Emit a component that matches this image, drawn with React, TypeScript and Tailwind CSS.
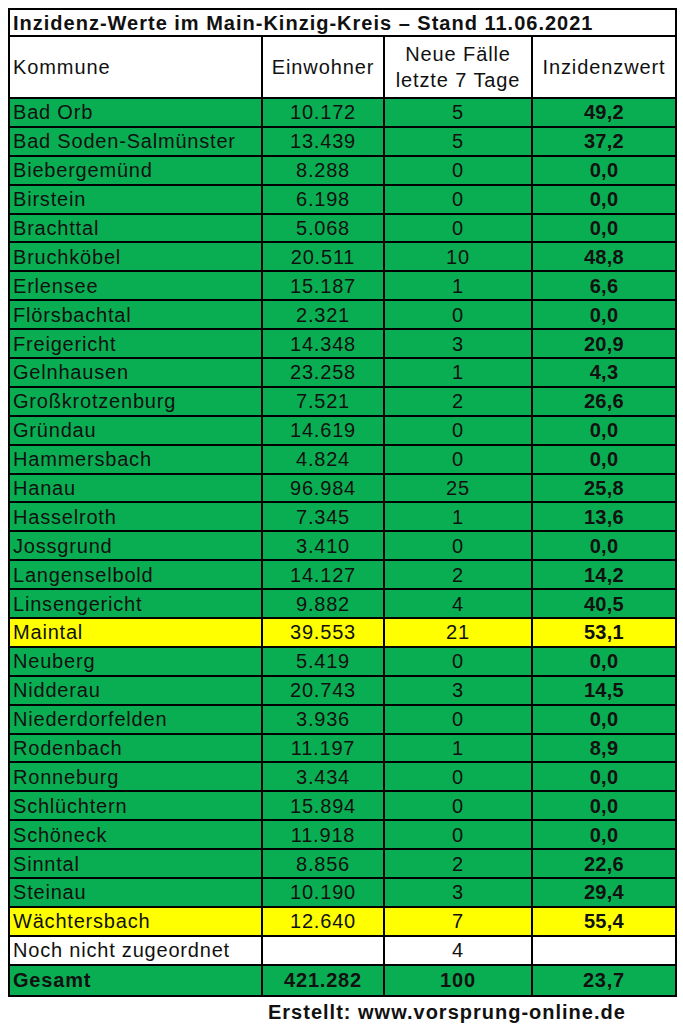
import React from "react";

type Row = { name: string; ew: string; neu: string; inz: string; color: "g" | "y" | "w"; bold?: boolean };

const rows: Row[] = [
  { name: "Bad Orb", ew: "10.172", neu: "5", inz: "49,2", color: "g" },
  { name: "Bad Soden-Salmünster", ew: "13.439", neu: "5", inz: "37,2", color: "g" },
  { name: "Biebergemünd", ew: "8.288", neu: "0", inz: "0,0", color: "g" },
  { name: "Birstein", ew: "6.198", neu: "0", inz: "0,0", color: "g" },
  { name: "Brachttal", ew: "5.068", neu: "0", inz: "0,0", color: "g" },
  { name: "Bruchköbel", ew: "20.511", neu: "10", inz: "48,8", color: "g" },
  { name: "Erlensee", ew: "15.187", neu: "1", inz: "6,6", color: "g" },
  { name: "Flörsbachtal", ew: "2.321", neu: "0", inz: "0,0", color: "g" },
  { name: "Freigericht", ew: "14.348", neu: "3", inz: "20,9", color: "g" },
  { name: "Gelnhausen", ew: "23.258", neu: "1", inz: "4,3", color: "g" },
  { name: "Großkrotzenburg", ew: "7.521", neu: "2", inz: "26,6", color: "g" },
  { name: "Gründau", ew: "14.619", neu: "0", inz: "0,0", color: "g" },
  { name: "Hammersbach", ew: "4.824", neu: "0", inz: "0,0", color: "g" },
  { name: "Hanau", ew: "96.984", neu: "25", inz: "25,8", color: "g" },
  { name: "Hasselroth", ew: "7.345", neu: "1", inz: "13,6", color: "g" },
  { name: "Jossgrund", ew: "3.410", neu: "0", inz: "0,0", color: "g" },
  { name: "Langenselbold", ew: "14.127", neu: "2", inz: "14,2", color: "g" },
  { name: "Linsengericht", ew: "9.882", neu: "4", inz: "40,5", color: "g" },
  { name: "Maintal", ew: "39.553", neu: "21", inz: "53,1", color: "y" },
  { name: "Neuberg", ew: "5.419", neu: "0", inz: "0,0", color: "g" },
  { name: "Nidderau", ew: "20.743", neu: "3", inz: "14,5", color: "g" },
  { name: "Niederdorfelden", ew: "3.936", neu: "0", inz: "0,0", color: "g" },
  { name: "Rodenbach", ew: "11.197", neu: "1", inz: "8,9", color: "g" },
  { name: "Ronneburg", ew: "3.434", neu: "0", inz: "0,0", color: "g" },
  { name: "Schlüchtern", ew: "15.894", neu: "0", inz: "0,0", color: "g" },
  { name: "Schöneck", ew: "11.918", neu: "0", inz: "0,0", color: "g" },
  { name: "Sinntal", ew: "8.856", neu: "2", inz: "22,6", color: "g" },
  { name: "Steinau", ew: "10.190", neu: "3", inz: "29,4", color: "g" },
  { name: "Wächtersbach", ew: "12.640", neu: "7", inz: "55,4", color: "y" },
  { name: "Noch nicht zugeordnet", ew: "", neu: "4", inz: "", color: "w" },
  { name: "Gesamt", ew: "421.282", neu: "100", inz: "23,7", color: "g", bold: true },
];

const bgFor = (c: Row["color"]) =>
  c === "g" ? "bg-[#0aae52]" : c === "y" ? "bg-[#ffff00]" : "bg-white";

export default function App() {
  return (
    <div
      className="w-[683px] h-[1024px] bg-white pt-[8px] pl-[8px] text-[#111]"
      style={{ fontFamily: '"Liberation Sans", Arial, sans-serif' }}
    >
      <div className="w-[669px] border-2 border-black">
        <div className="h-[27px] border-b-2 border-black flex items-center pl-[3px] font-bold text-[20px] tracking-[1px] leading-none whitespace-nowrap">
          Inzidenz-Werte im Main-Kinzig-Kreis – Stand 11.06.2021
        </div>
        <div className="grid grid-cols-[253px_122px_148px_142px] h-[62px] border-b-2 border-black text-[20px] tracking-[0.9px] leading-[26px]">
          <div className="border-r-2 border-black flex items-center pl-[3px]">Kommune</div>
          <div className="border-r-2 border-black flex items-center justify-center">Einwohner</div>
          <div className="border-r-2 border-black flex flex-col items-center justify-center text-center">
            <span>Neue Fälle</span>
            <span>letzte 7 Tage</span>
          </div>
          <div className="flex items-center justify-center">Inzidenzwert</div>
        </div>
        {rows.map((r, i) => (
          <div
            key={r.name}
            className={`grid grid-cols-[253px_122px_148px_142px] h-[28.9px] ${
              i < rows.length - 1 ? "border-b-2 border-black" : ""
            } ${bgFor(r.color)} text-[20px] tracking-[0.8px] leading-none ${r.bold ? "font-bold" : ""}`}
          >
            <div className="border-r-2 border-black flex items-center pl-[3px] whitespace-nowrap">{r.name}</div>
            <div className="border-r-2 border-black flex items-center justify-center">{r.ew}</div>
            <div className="border-r-2 border-black flex items-center justify-center">{r.neu}</div>
            <div className={`flex items-center justify-center ${r.bold ? "" : "font-bold tracking-[0.3px]"}`}>{r.inz}</div>
          </div>
        ))}
      </div>
      <div className="pl-[260px] pt-[5px] font-bold text-[20px] tracking-[1px] leading-none whitespace-nowrap">
        Erstellt: www.vorsprung-online.de
      </div>
    </div>
  );
}
